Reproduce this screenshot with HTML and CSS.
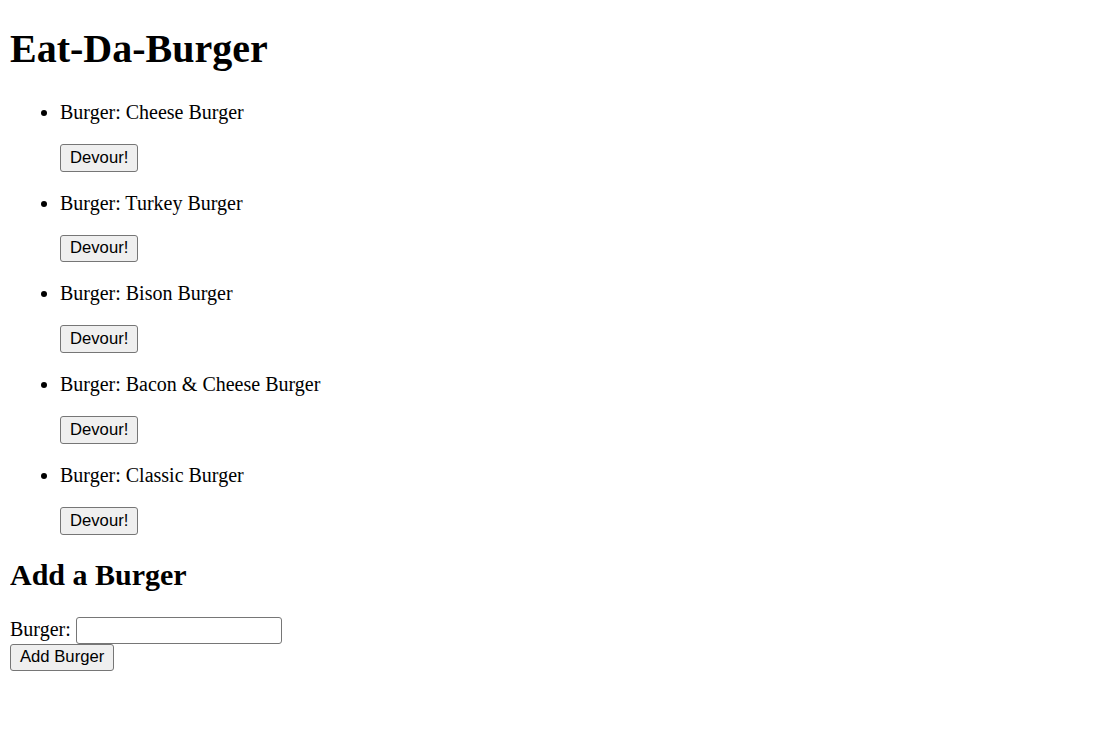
FILE: index.html
```html
<!DOCTYPE html>
<html>
<head>
<meta charset="utf-8">
<title>Eat-Da-Burger</title>
<link rel="stylesheet" href="styles.css">
</head>
<body>
<h1 class="title">Eat-Da-Burger</h1>
<ul class="burgers">
  <li><p class="name">Burger: Cheese Burger</p><button class="btn">Devour!</button></li>
  <li><p class="name">Burger: Turkey Burger</p><button class="btn">Devour!</button></li>
  <li><p class="name">Burger: Bison Burger</p><button class="btn">Devour!</button></li>
  <li><p class="name">Burger: Bacon &amp; Cheese Burger</p><button class="btn">Devour!</button></li>
  <li><p class="name">Burger: Classic Burger</p><button class="btn">Devour!</button></li>
</ul>
<h2 class="subtitle">Add a Burger</h2>
<form class="add-form">
  <label for="burger">Burger:</label> <input id="burger" class="field" type="text"><br>
  <button class="btn" type="button">Add Burger</button>
</form>
</body>
</html>
```
FILE: styles.css
```css
html {
  background: #fff;
}
body {
  margin: 10px;
  font-family: "Liberation Serif", "Times New Roman", serif;
  font-size: 20px;
  color: #000;
}
.title {
  font-size: 40px;
  font-weight: bold;
  margin: 15px 0 28.8px;
}
.subtitle {
  font-size: 30px;
  font-weight: bold;
  margin: 23px 0 24.9px;
}
.burgers {
  margin: 20px 0;
  padding-left: 50px;
  list-style: disc;
}
.name {
  margin: 20px 0;
}
.btn {
  font-family: "Liberation Sans", Arial, sans-serif;
  font-size: 16.67px;
  padding: 2.9px 9px;
  border: 1px solid #767676;
  border-radius: 3px;
  background: #efefef;
  color: #000;
  margin: 0;
}
.add-form {
  margin: 0;
}
.field {
  font-family: "Liberation Sans", Arial, sans-serif;
  font-size: 16.67px;
  width: 206px;
  height: 27px;
  box-sizing: border-box;
  border: 1px solid #767676;
  border-radius: 3px;
  padding: 1px 2px;
  margin: 0;
  vertical-align: baseline;
}
```
